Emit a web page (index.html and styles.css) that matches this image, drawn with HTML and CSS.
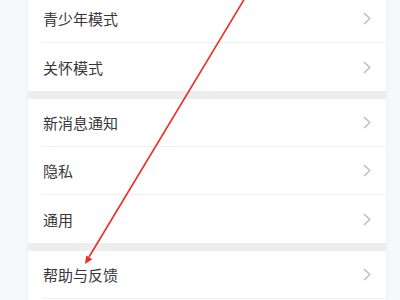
FILE: index.html
```html
<!DOCTYPE html>
<html lang="zh">
<head>
<meta charset="utf-8">
<link rel="stylesheet" href="styles.css">
</head>
<body>
<div class="panel">
  <div class="group">
    <div class="row"><div class="row-inner"><span class="label">青少年模式</span><svg class="chev" width="8" height="13" viewBox="0 0 8 13"><path d="M1 1 L6.8 6.5 L1 12" /></svg></div></div>
    <div class="row last"><div class="row-inner"><span class="label">关怀模式</span><svg class="chev" width="8" height="13" viewBox="0 0 8 13"><path d="M1 1 L6.8 6.5 L1 12" /></svg></div></div>
  </div>
  <div class="sep"></div>
  <div class="group">
    <div class="row"><div class="row-inner"><span class="label">新消息通知</span><svg class="chev" width="8" height="13" viewBox="0 0 8 13"><path d="M1 1 L6.8 6.5 L1 12" /></svg></div></div>
    <div class="row"><div class="row-inner"><span class="label">隐私</span><svg class="chev" width="8" height="13" viewBox="0 0 8 13"><path d="M1 1 L6.8 6.5 L1 12" /></svg></div></div>
    <div class="row last"><div class="row-inner"><span class="label">通用</span><svg class="chev" width="8" height="13" viewBox="0 0 8 13"><path d="M1 1 L6.8 6.5 L1 12" /></svg></div></div>
  </div>
  <div class="sep"></div>
  <div class="group">
    <div class="row"><div class="row-inner"><span class="label">帮助与反馈</span><svg class="chev" width="8" height="13" viewBox="0 0 8 13"><path d="M1 1 L6.8 6.5 L1 12" /></svg></div></div>
    <div class="row tail"></div>
  </div>
</div>
<svg class="arrow" width="400" height="300" viewBox="0 0 400 300">
  <line x1="245" y1="-2" x2="89" y2="257" />
  <polygon points="85,264 92.3,259.2 86.2,255.4" />
</svg>
</body>
</html>
```
FILE: styles.css
```css
html, body {
  margin: 0;
  padding: 0;
  width: 400px;
  height: 300px;
  overflow: hidden;
  background: #f7f8fa;
  font-family: "Noto Sans CJK SC", "Noto Sans", sans-serif;
}
.panel {
  margin: -5px 14px 0 28px;
  width: 358px;
  background: #ffffff;
  box-shadow: 0 0 6px rgba(0, 0, 0, 0.05);
}
.row {
  height: 48px;
  padding-left: 14px;
  display: flex;
}
.row.tail {
  height: 10px;
}
.row-inner {
  flex: 1;
  height: 47px;
  border-bottom: 1px solid #f0f0f0;
  display: flex;
  align-items: center;
  justify-content: space-between;
  padding-right: 15px;
}
.row.last .row-inner {
  height: 48px;
  border-bottom: none;
}
.label {
  font-size: 15px;
  color: #383838;
  padding-left: 1px;
  line-height: 1;
}
.chev path {
  fill: none;
  stroke: #b9b9b9;
  stroke-width: 1.3;
}
.sep {
  height: 8px;
  background: #ededed;
}
.arrow {
  position: absolute;
  left: 0;
  top: 0;
  pointer-events: none;
}
.arrow line {
  stroke: #ec2d24;
  stroke-width: 1.6;
}
.arrow polygon {
  fill: #ec2d24;
}
```
